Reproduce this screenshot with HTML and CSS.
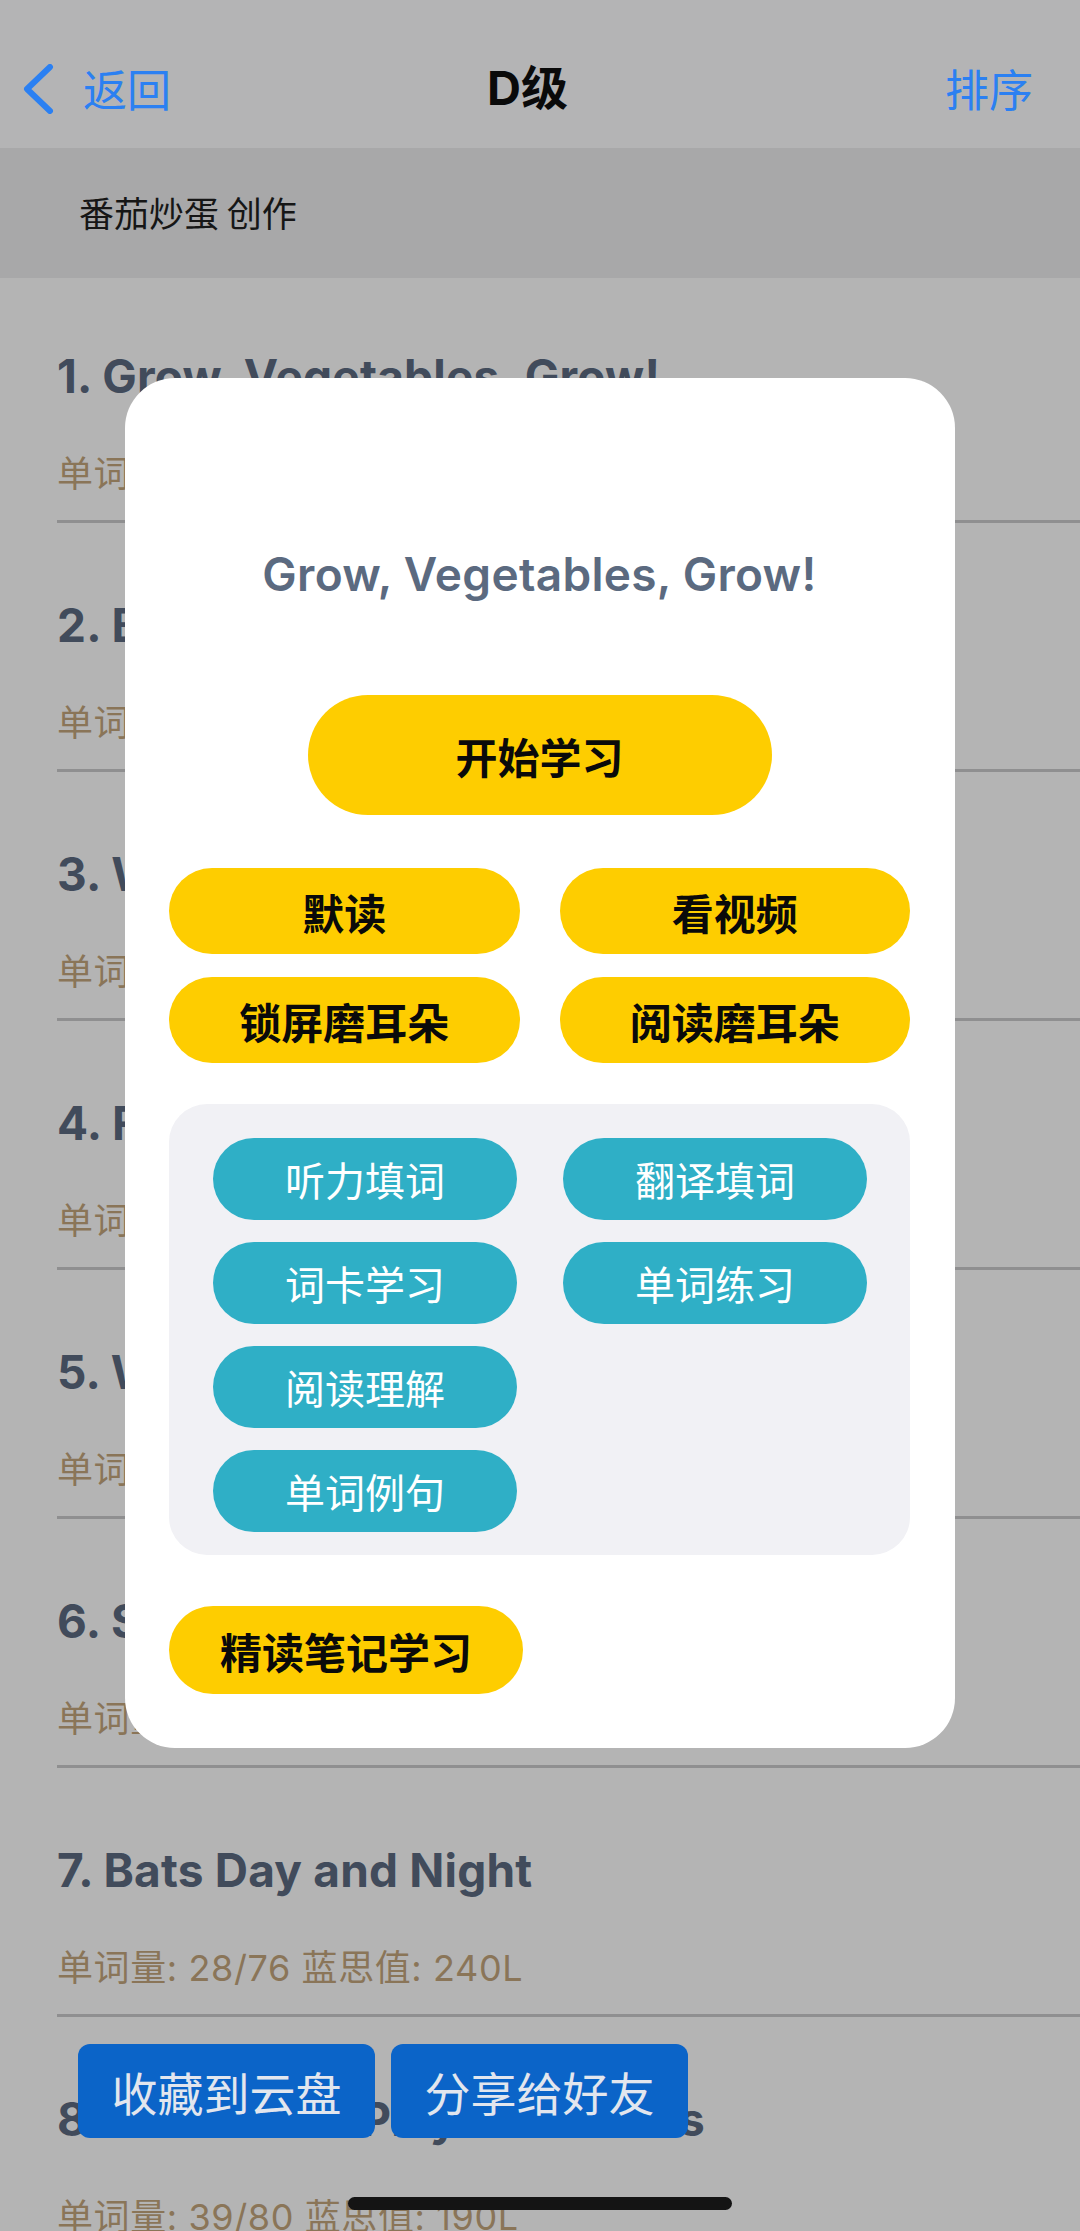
FILE: index.html
```html
<!DOCTYPE html>
<html lang="zh-CN">
<head>
<meta charset="utf-8">
<title>D级</title>
<link rel="stylesheet" href="styles.css">
</head>
<body>
<div class="screen">
  <header class="nav">
    <div class="nav-left">
      <svg class="chevron" viewBox="0 0 32 50" width="32" height="50"><polyline points="28,3 5,25 28,47" fill="none" stroke="#2b80f2" stroke-width="6" stroke-linecap="round" stroke-linejoin="round"/></svg>
      <span class="nav-back">返回</span>
    </div>
    <div class="nav-title">D级</div>
    <div class="nav-right">排序</div>
  </header>
  <div class="subheader">番茄炒蛋 创作</div>
  <ul class="list">
    <li class="item"><div class="item-title">1. Grow, Vegetables, Grow!</div><div class="item-sub">单词量: 32/90 蓝思值: 260L</div></li>
    <li class="item"><div class="item-title">2. Baby Animals</div><div class="item-sub">单词量: 30/82 蓝思值: 250L</div></li>
    <li class="item"><div class="item-title">3. What Is a Family?</div><div class="item-sub">单词量: 26/70 蓝思值: 230L</div></li>
    <li class="item"><div class="item-title">4. Fun at the Park</div><div class="item-sub">单词量: 34/88 蓝思值: 210L</div></li>
    <li class="item"><div class="item-title">5. Where Do Animals Live?</div><div class="item-sub">单词量: 29/74 蓝思值: 220L</div></li>
    <li class="item"><div class="item-title">6. Seasons of the Year</div><div class="item-sub">单词量: 31/78 蓝思值: 250L</div></li>
    <li class="item"><div class="item-title">7. Bats Day and Night</div><div class="item-sub">单词量: 28/76 蓝思值: 240L</div></li>
    <li class="item"><div class="item-title">8. Animals at Play in the Hills</div><div class="item-sub">单词量: 39/80 蓝思值: 190L</div></li>
  </ul>

  <div class="modal">
    <div class="modal-title">Grow, Vegetables, Grow!</div>
    <div class="btn-start">开始学习</div>
    <div class="yellow-grid">
      <div class="btn-y">默读</div>
      <div class="btn-y">看视频</div>
      <div class="btn-y tall">锁屏磨耳朵</div>
      <div class="btn-y tall">阅读磨耳朵</div>
    </div>
    <div class="panel">
      <div class="btn-t">听力填词</div>
      <div class="btn-t">翻译填词</div>
      <div class="btn-t">词卡学习</div>
      <div class="btn-t">单词练习</div>
      <div class="btn-t">阅读理解</div>
      <div class="cell-empty"></div>
      <div class="btn-t">单词例句</div>
    </div>
    <div class="btn-note">精读笔记学习</div>
  </div>

  <div class="actions">
    <div class="btn-blue">收藏到云盘</div>
    <div class="btn-blue">分享给好友</div>
  </div>
  <div class="home-indicator"></div>
</div>
</body>
</html>
```
FILE: styles.css
```css
* { box-sizing: border-box; margin: 0; padding: 0; }
html, body { width: 1080px; height: 2231px; overflow: hidden; }
body {
  background: #b4b4b4;
  font-family: "Inter", "Noto Sans CJK SC", sans-serif;
  color: #1a1a1a;
}
.screen { position: relative; width: 1080px; height: 2231px; overflow: hidden; background: #b4b4b4; }

.nav {
  height: 148px;
  display: grid;
  grid-template-columns: 1fr auto 1fr;
  align-items: center;
  padding: 28px 47px 0 22px;
  background: #b4b4b5;
}
.nav-left { display: flex; align-items: center; gap: 29px; color: #2b80f2; }
.chevron { display: block; margin-top: 2px; }
.nav-back { font-family: "Noto Sans CJK SC", sans-serif; font-size: 44px; line-height: 60px; }
.nav-title { font-family: "Inter", "Noto Sans CJK SC", sans-serif; font-weight: 700; font-size: 47px; line-height: 60px; color: #0a0a0a; }
.nav-right { justify-self: end; font-family: "Noto Sans CJK SC", sans-serif; font-size: 44px; line-height: 60px; color: #2b80f2; }

.subheader {
  height: 130px;
  display: flex;
  align-items: center;
  padding: 0 0 4px 79px;
  background: #a8a8a9;
  font-family: "Noto Sans CJK SC", sans-serif;
  font-size: 35px;
  color: #161616;
}

.list { list-style: none; }
.item {
  margin-left: 57px;
  padding: 74px 0 22px;
  border-bottom: 3px solid #8f8f90;
}
.item:first-child { padding-top: 70px; }
.item-title {
  font-weight: 700;
  font-size: 46px;
  line-height: 56px;
  color: #414b5b;
  white-space: nowrap;
  letter-spacing: 0.2px;
}
.item-sub {
  margin-top: 46px;
  font-size: 36px;
  line-height: 48px;
  color: #8a7558;
  white-space: nowrap;
  letter-spacing: 0.6px;
}

.modal {
  position: absolute;
  left: 125px;
  top: 378px;
  width: 830px;
  height: 1370px;
  background: #ffffff;
  border-radius: 50px;
  padding: 166px 45px 54px 44px;
  display: flex;
  flex-direction: column;
}
.modal-title {
  text-align: center;
  font-weight: 600;
  font-size: 46px;
  line-height: 60px;
  color: #5b6a80;
  letter-spacing: 0.3px;
  white-space: nowrap;
}
.btn-start {
  align-self: center;
  margin-top: 91px;
  width: 464px;
  height: 120px;
  border-radius: 60px;
  background: #fecd00;
  display: flex; align-items: center; justify-content: center;
  font-family: "Noto Sans CJK SC", sans-serif;
  font-weight: 700;
  font-size: 42px;
  color: #0a0a0a;
}
.yellow-grid {
  margin-top: 53px;
  display: grid;
  grid-template-columns: 1fr 1fr;
  column-gap: 40px;
  row-gap: 23px;
}
.btn-y, .btn-note {
  height: 86px;
  border-radius: 43px;
  background: #fecd00;
  display: flex; align-items: center; justify-content: center;
  font-family: "Noto Sans CJK SC", sans-serif;
  font-weight: 700;
  font-size: 42px;
  color: #0a0a0a;
}
.panel {
  margin-top: 41px;
  height: 451px;
  background: #f1f1f5;
  border-radius: 38px;
  padding: 34px 43px 23px 44px;
  display: grid;
  grid-template-columns: 304px 304px;
  grid-auto-rows: 82px;
  column-gap: 46px;
  row-gap: 22px;
}
.btn-t {
  border-radius: 41px;
  background: #2fafc6;
  display: flex; align-items: center; justify-content: center;
  font-family: "Noto Sans CJK SC", sans-serif;
  font-size: 40px;
  color: #ffffff;
}
.btn-note {
  margin-top: 51px;
  width: 354px;
  height: 88px;
  border-radius: 44px;
}

.actions {
  position: absolute;
  left: 78px;
  top: 2044px;
  display: flex;
  gap: 16px;
}
.btn-blue {
  width: 297px;
  height: 94px;
  border-radius: 12px;
  background: #0b64c8;
  display: flex; align-items: center; justify-content: center;
  font-family: "Noto Sans CJK SC", sans-serif;
  font-size: 46px;
  color: #e2e6ee;
}
.home-indicator {
  position: absolute;
  left: 348px;
  top: 2197px;
  width: 384px;
  height: 13px;
  border-radius: 7px;
  background: #141414;
}
```
